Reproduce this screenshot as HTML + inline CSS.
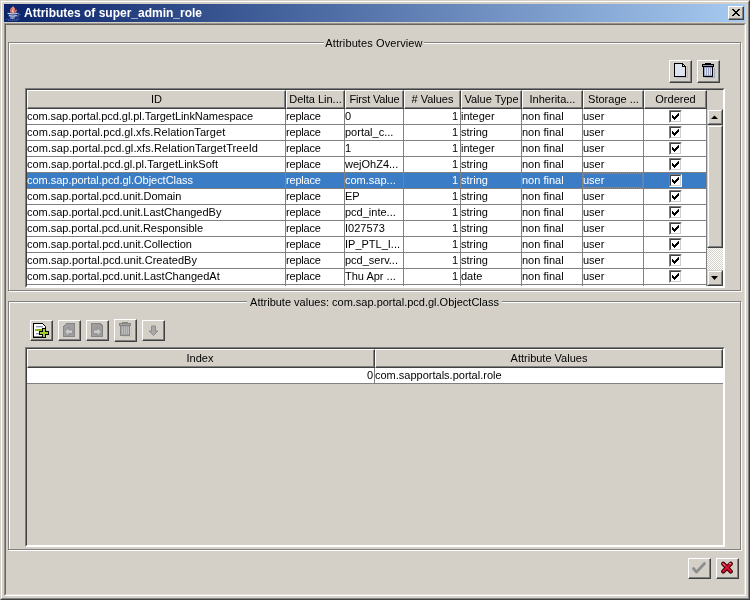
<!DOCTYPE html>
<html><head><meta charset="utf-8"><title>Attributes of super_admin_role</title>
<style>
*,*:before,*:after{box-sizing:border-box;margin:0;padding:0}
html,body{width:750px;height:600px;overflow:hidden;background:#d4d0c8}
body{position:relative;font-family:"Liberation Sans",sans-serif;font-size:11px;color:#000;line-height:16px}
.abs{position:absolute}
#frame{left:0;top:0;width:750px;height:600px;border-top:1px solid #d4d0c8;border-left:1px solid #d4d0c8;border-right:1px solid #404040;border-bottom:1px solid #404040}
#frame2{left:1px;top:1px;width:748px;height:598px;border-top:1px solid #fff;border-left:1px solid #fff;border-right:1px solid #808080;border-bottom:1px solid #808080}
#title{left:4px;top:4px;width:741px;height:18px;background:linear-gradient(to right,#0a246a 0%,#a6caf0 100%)}
#ttext{left:4px;top:4px;width:700px;height:18px}
#ttext span{position:absolute;left:20px;top:0;height:18px;line-height:18px;color:#fff;font-weight:bold;font-size:12px;white-space:nowrap}
#close{left:728px;top:6px;width:16px;height:14px;background:#d4d0c8;border-top:1px solid #fff;border-left:1px solid #fff;border-right:1px solid #404040;border-bottom:1px solid #404040}
#close i{position:absolute;left:0;top:0;right:0;bottom:0;border-right:1px solid #808080;border-bottom:1px solid #808080}
#client{left:4px;top:23px;width:742px;height:573px;border-top:1px solid #94918c;border-left:1px solid #94918c;border-right:1px solid #fff;border-bottom:1px solid #fff}
#client2{left:5px;top:24px;width:740px;height:571px;border-top:1px solid #67655f;border-left:1px solid #67655f;border-right:1px solid #e2dfd9;border-bottom:1px solid #e2dfd9}
.etch{border:1px solid #808080;box-shadow:1px 1px 0 #fff, inset 1px 1px 0 #fff}
.gbg{background:#d4d0c8;height:4px}
.gtitle{white-space:nowrap;text-align:center;height:14px;line-height:14px}
.btn{background:#d4d0c8;border-top:1px solid #fff;border-left:1px solid #fff;border-right:1px solid #404040;border-bottom:1px solid #404040}
.btn:after{content:"";position:absolute;left:0;top:0;right:0;bottom:0;border-right:1px solid #808080;border-bottom:1px solid #808080}
.sp{background:#d4d0c8;border:1px solid;border-color:#808080 #fff #fff #808080}
.sp:after{content:"";position:absolute;left:0;top:0;right:0;bottom:0;border:1px solid;border-color:#404040 #fff #fff #404040}
.th{position:absolute;top:0;height:19px;line-height:17px;text-align:center;border-top:1px solid #fff;border-left:1px solid #fff;border-right:1px solid #404040;border-bottom:1px solid #404040;box-shadow:inset -1px -1px 0 #808080;white-space:nowrap;overflow:hidden}
.row{position:absolute;left:0;height:16px;width:680px;background:#fff;border-bottom:1px solid #808080}
.row b{position:absolute;top:0;height:15px;line-height:15px;font-weight:normal;white-space:nowrap;overflow:hidden;border-right:1px solid #808080;padding-left:0}
.row.sel{background:#3a7cc5;color:#fff}
.focus{position:absolute;left:556px;top:0;width:60px;height:15px;border:1px dotted #c0a080;opacity:.5}
.cb{position:absolute;left:25px;top:1px;width:13px;height:13px;background:#fff;border-top:1px solid #808080;border-left:1px solid #808080;border-right:1px solid #fff;border-bottom:1px solid #fff}
.cb:after{content:"";position:absolute;left:0;top:0;width:11px;height:11px;border-top:1px solid #404040;border-left:1px solid #404040;border-right:1px solid #d4d0c8;border-bottom:1px solid #d4d0c8}
#sbtrack{background-color:#d4d0c8;background-image:linear-gradient(45deg,#fff 25%,transparent 25%,transparent 75%,#fff 75%),linear-gradient(45deg,#fff 25%,transparent 25%,transparent 75%,#fff 75%);background-size:2px 2px;background-position:0 0,1px 1px}
.sbb{background:#d4d0c8;border-top:1px solid #d4d0c8;border-left:1px solid #d4d0c8;border-right:1px solid #404040;border-bottom:1px solid #404040}
.sbb:after{content:"";position:absolute;left:0;top:0;right:0;bottom:0;border-top:1px solid #fff;border-left:1px solid #fff;border-right:1px solid #808080;border-bottom:1px solid #808080}
#wrap{position:absolute;left:0;top:0;width:750px;height:600px}
.th,.row b,.gtitle,#ttext{filter:grayscale(1)}
.hbg{position:absolute;left:0;top:0;right:0;height:19px;background:#d4d0c8}

</style></head><body><div id="wrap">
<div id="frame" class="abs"></div><div id="frame2" class="abs"></div>
<div id="title" class="abs"></div><svg class="abs" style="left:5px;top:4px" width="17" height="18" viewBox="0 0 17 18">
<path d="M8.700 .8c.3 1.600-2.900 2.800-3.600 5-.4 1.300-.2 2.200.4 2.900h5.300c.9-.9 1.200-2.200.4-3.700-.3 1-.8 1.400-1.500 1.800.9-1.600.3-2.700-.5-3.400-.8-.8-.9-1.500-.5-2.600z" fill="#ea8672"/>
<path d="M7.300 8.600c-1.300-1.500-.3-2.700 1.100-3.900-.5 1.500-.4 2.200.6 3.900z" fill="#f6c3b4"/>
<path d="M6.200 8.600c-.9-1.400-.2-2.600.9-3.600M9.600 8.500c.5-.8.400-1.600-.2-2.500" fill="none" stroke="#7a2a4a" stroke-width=".6"/>
<path d="M2.600 9.300c1.500.7 8 .7 10-.1M3.800 11.600c1.600.6 6.400.6 8 0M5.200 13.700c1.200.4 3.400.4 4.600 0" fill="none" stroke="#d4ddf8" stroke-width="1.200"/>
<path d="M12.800 9.400c1.800-.3 1.900 1.700-.6 2.600" fill="none" stroke="#8fa2df" stroke-width=".8"/>
<path d="M1.500 14.800c2 1.900 10.500 2 13.500-.4" fill="none" stroke="#7188d2" stroke-width="1.100" stroke-dasharray="1 1"/>
<path d="M11 15.500l4.500-5" fill="none" stroke="#6a80cc" stroke-width=".9" stroke-dasharray="1 1"/>
</svg><div class="abs" id="ttext"><span>Attributes of super_admin_role</span></div>
<div id="close" class="abs"><i></i><svg class="abs" style="left:3px;top:2px" width="8" height="7" viewBox="0 0 8 7" shape-rendering="crispEdges" fill="#000"><rect x="0" y="0" width="2" height="1"/><rect x="6" y="0" width="2" height="1"/><rect x="1" y="1" width="2" height="1"/><rect x="5" y="1" width="2" height="1"/><rect x="2" y="2" width="4" height="1"/><rect x="3" y="3" width="2" height="1"/><rect x="2" y="4" width="4" height="1"/><rect x="1" y="5" width="2" height="1"/><rect x="5" y="5" width="2" height="1"/><rect x="0" y="6" width="2" height="1"/><rect x="6" y="6" width="2" height="1"/></svg></div>
<div id="client" class="abs"></div><div id="client2" class="abs"></div>

<!-- group 1 -->
<div class="abs etch" style="left:8px;top:42px;width:733px;height:249px"></div>
<div class="abs gbg" style="left:324px;top:41px;width:100px"></div><div class="abs gtitle" style="left:324px;top:36px;width:100px;letter-spacing:.1px">Attributes Overview</div>
<!-- group 2 -->
<div class="abs etch" style="left:8px;top:301px;width:733px;height:249px"></div>
<div class="abs gbg" style="left:247px;top:300px;width:255px"></div><div class="abs gtitle" style="left:247px;top:295px;width:255px">Attribute values: com.sap.portal.pcd.gl.ObjectClass</div>
<div class="abs sp" style="left:25px;top:88px;width:700px;height:200px"></div>
<div class="abs" id="t1" style="left:27px;top:90px;width:680px;height:196px;background:#fff;overflow:hidden">
<div class="hbg"></div>
<div class="th" style="left:0px;width:259px">ID</div>
<div class="th" style="left:259px;width:59px">Delta Lin...</div>
<div class="th" style="left:318px;width:59px;letter-spacing:-.15px">First Value</div>
<div class="th" style="left:377px;width:57px"># Values</div>
<div class="th" style="left:434px;width:61px">Value Type</div>
<div class="th" style="left:495px;width:61px">Inherita...</div>
<div class="th" style="left:556px;width:61px">Storage ...</div>
<div class="th" style="left:617px;width:63px">Ordered</div>
<div class="row" style="top:19px">
<b style="left:0px;width:259px;letter-spacing:-0.061px">com.sap.portal.pcd.gl.pl.TargetLinkNamespace</b>
<b style="left:259px;width:59px;letter-spacing:-.2px">replace</b>
<b style="left:318px;width:59px">0</b>
<b style="left:377px;width:57px;text-align:right;padding:0 2px 0 0">1</b>
<b style="left:434px;width:61px">integer</b>
<b style="left:495px;width:61px">non final</b>
<b style="left:556px;width:61px">user</b>
<b style="left:617px;width:63px;padding:0"><i class="cb"><svg width="7" height="7" viewBox="0 0 7 7" shape-rendering="crispEdges" fill="#000" style="position:absolute;left:2px;top:2px"><rect x="0" y="2" width="1" height="3"/><rect x="1" y="3" width="1" height="3"/><rect x="2" y="4" width="1" height="3"/><rect x="3" y="3" width="1" height="3"/><rect x="4" y="2" width="1" height="3"/><rect x="5" y="1" width="1" height="3"/><rect x="6" y="0" width="1" height="3"/></svg></i></b>
</div>
<div class="row" style="top:35px">
<b style="left:0px;width:259px;letter-spacing:0.067px">com.sap.portal.pcd.gl.xfs.RelationTarget</b>
<b style="left:259px;width:59px;letter-spacing:-.2px">replace</b>
<b style="left:318px;width:59px">portal_c...</b>
<b style="left:377px;width:57px;text-align:right;padding:0 2px 0 0">1</b>
<b style="left:434px;width:61px">string</b>
<b style="left:495px;width:61px">non final</b>
<b style="left:556px;width:61px">user</b>
<b style="left:617px;width:63px;padding:0"><i class="cb"><svg width="7" height="7" viewBox="0 0 7 7" shape-rendering="crispEdges" fill="#000" style="position:absolute;left:2px;top:2px"><rect x="0" y="2" width="1" height="3"/><rect x="1" y="3" width="1" height="3"/><rect x="2" y="4" width="1" height="3"/><rect x="3" y="3" width="1" height="3"/><rect x="4" y="2" width="1" height="3"/><rect x="5" y="1" width="1" height="3"/><rect x="6" y="0" width="1" height="3"/></svg></i></b>
</div>
<div class="row" style="top:51px">
<b style="left:0px;width:259px;letter-spacing:0.087px">com.sap.portal.pcd.gl.xfs.RelationTargetTreeId</b>
<b style="left:259px;width:59px;letter-spacing:-.2px">replace</b>
<b style="left:318px;width:59px">1</b>
<b style="left:377px;width:57px;text-align:right;padding:0 2px 0 0">1</b>
<b style="left:434px;width:61px">integer</b>
<b style="left:495px;width:61px">non final</b>
<b style="left:556px;width:61px">user</b>
<b style="left:617px;width:63px;padding:0"><i class="cb"><svg width="7" height="7" viewBox="0 0 7 7" shape-rendering="crispEdges" fill="#000" style="position:absolute;left:2px;top:2px"><rect x="0" y="2" width="1" height="3"/><rect x="1" y="3" width="1" height="3"/><rect x="2" y="4" width="1" height="3"/><rect x="3" y="3" width="1" height="3"/><rect x="4" y="2" width="1" height="3"/><rect x="5" y="1" width="1" height="3"/><rect x="6" y="0" width="1" height="3"/></svg></i></b>
</div>
<div class="row" style="top:67px">
<b style="left:0px;width:259px;letter-spacing:0.038px">com.sap.portal.pcd.gl.pl.TargetLinkSoft</b>
<b style="left:259px;width:59px;letter-spacing:-.2px">replace</b>
<b style="left:318px;width:59px">wejOhZ4...</b>
<b style="left:377px;width:57px;text-align:right;padding:0 2px 0 0">1</b>
<b style="left:434px;width:61px">string</b>
<b style="left:495px;width:61px">non final</b>
<b style="left:556px;width:61px">user</b>
<b style="left:617px;width:63px;padding:0"><i class="cb"><svg width="7" height="7" viewBox="0 0 7 7" shape-rendering="crispEdges" fill="#000" style="position:absolute;left:2px;top:2px"><rect x="0" y="2" width="1" height="3"/><rect x="1" y="3" width="1" height="3"/><rect x="2" y="4" width="1" height="3"/><rect x="3" y="3" width="1" height="3"/><rect x="4" y="2" width="1" height="3"/><rect x="5" y="1" width="1" height="3"/><rect x="6" y="0" width="1" height="3"/></svg></i></b>
</div>
<div class="row sel" style="top:83px">
<b style="left:0px;width:259px;letter-spacing:-0.027px">com.sap.portal.pcd.gl.ObjectClass</b>
<b style="left:259px;width:59px;letter-spacing:-.2px">replace</b>
<b style="left:318px;width:59px">com.sap...</b>
<b style="left:377px;width:57px;text-align:right;padding:0 2px 0 0">1</b>
<b style="left:434px;width:61px">string</b>
<b style="left:495px;width:61px">non final</b>
<b style="left:556px;width:61px">user</b>
<b style="left:617px;width:63px;padding:0"><i class="cb"><svg width="7" height="7" viewBox="0 0 7 7" shape-rendering="crispEdges" fill="#000" style="position:absolute;left:2px;top:2px"><rect x="0" y="2" width="1" height="3"/><rect x="1" y="3" width="1" height="3"/><rect x="2" y="4" width="1" height="3"/><rect x="3" y="3" width="1" height="3"/><rect x="4" y="2" width="1" height="3"/><rect x="5" y="1" width="1" height="3"/><rect x="6" y="0" width="1" height="3"/></svg></i></b>
<u class="focus"></u>
</div>
<div class="row" style="top:99px">
<b style="left:0px;width:259px;letter-spacing:-0.01px">com.sap.portal.pcd.unit.Domain</b>
<b style="left:259px;width:59px;letter-spacing:-.2px">replace</b>
<b style="left:318px;width:59px">EP</b>
<b style="left:377px;width:57px;text-align:right;padding:0 2px 0 0">1</b>
<b style="left:434px;width:61px">string</b>
<b style="left:495px;width:61px">non final</b>
<b style="left:556px;width:61px">user</b>
<b style="left:617px;width:63px;padding:0"><i class="cb"><svg width="7" height="7" viewBox="0 0 7 7" shape-rendering="crispEdges" fill="#000" style="position:absolute;left:2px;top:2px"><rect x="0" y="2" width="1" height="3"/><rect x="1" y="3" width="1" height="3"/><rect x="2" y="4" width="1" height="3"/><rect x="3" y="3" width="1" height="3"/><rect x="4" y="2" width="1" height="3"/><rect x="5" y="1" width="1" height="3"/><rect x="6" y="0" width="1" height="3"/></svg></i></b>
</div>
<div class="row" style="top:115px">
<b style="left:0px;width:259px;letter-spacing:-0.019px">com.sap.portal.pcd.unit.LastChangedBy</b>
<b style="left:259px;width:59px;letter-spacing:-.2px">replace</b>
<b style="left:318px;width:59px">pcd_inte...</b>
<b style="left:377px;width:57px;text-align:right;padding:0 2px 0 0">1</b>
<b style="left:434px;width:61px">string</b>
<b style="left:495px;width:61px">non final</b>
<b style="left:556px;width:61px">user</b>
<b style="left:617px;width:63px;padding:0"><i class="cb"><svg width="7" height="7" viewBox="0 0 7 7" shape-rendering="crispEdges" fill="#000" style="position:absolute;left:2px;top:2px"><rect x="0" y="2" width="1" height="3"/><rect x="1" y="3" width="1" height="3"/><rect x="2" y="4" width="1" height="3"/><rect x="3" y="3" width="1" height="3"/><rect x="4" y="2" width="1" height="3"/><rect x="5" y="1" width="1" height="3"/><rect x="6" y="0" width="1" height="3"/></svg></i></b>
</div>
<div class="row" style="top:131px">
<b style="left:0px;width:259px;letter-spacing:-0.037px">com.sap.portal.pcd.unit.Responsible</b>
<b style="left:259px;width:59px;letter-spacing:-.2px">replace</b>
<b style="left:318px;width:59px">I027573</b>
<b style="left:377px;width:57px;text-align:right;padding:0 2px 0 0">1</b>
<b style="left:434px;width:61px">string</b>
<b style="left:495px;width:61px">non final</b>
<b style="left:556px;width:61px">user</b>
<b style="left:617px;width:63px;padding:0"><i class="cb"><svg width="7" height="7" viewBox="0 0 7 7" shape-rendering="crispEdges" fill="#000" style="position:absolute;left:2px;top:2px"><rect x="0" y="2" width="1" height="3"/><rect x="1" y="3" width="1" height="3"/><rect x="2" y="4" width="1" height="3"/><rect x="3" y="3" width="1" height="3"/><rect x="4" y="2" width="1" height="3"/><rect x="5" y="1" width="1" height="3"/><rect x="6" y="0" width="1" height="3"/></svg></i></b>
</div>
<div class="row" style="top:147px">
<b style="left:0px;width:259px;letter-spacing:-0.003px">com.sap.portal.pcd.unit.Collection</b>
<b style="left:259px;width:59px;letter-spacing:-.2px">replace</b>
<b style="left:318px;width:59px">IP_PTL_I...</b>
<b style="left:377px;width:57px;text-align:right;padding:0 2px 0 0">1</b>
<b style="left:434px;width:61px">string</b>
<b style="left:495px;width:61px">non final</b>
<b style="left:556px;width:61px">user</b>
<b style="left:617px;width:63px;padding:0"><i class="cb"><svg width="7" height="7" viewBox="0 0 7 7" shape-rendering="crispEdges" fill="#000" style="position:absolute;left:2px;top:2px"><rect x="0" y="2" width="1" height="3"/><rect x="1" y="3" width="1" height="3"/><rect x="2" y="4" width="1" height="3"/><rect x="3" y="3" width="1" height="3"/><rect x="4" y="2" width="1" height="3"/><rect x="5" y="1" width="1" height="3"/><rect x="6" y="0" width="1" height="3"/></svg></i></b>
</div>
<div class="row" style="top:163px">
<b style="left:0px;width:259px;letter-spacing:0.036px">com.sap.portal.pcd.unit.CreatedBy</b>
<b style="left:259px;width:59px;letter-spacing:-.2px">replace</b>
<b style="left:318px;width:59px">pcd_serv...</b>
<b style="left:377px;width:57px;text-align:right;padding:0 2px 0 0">1</b>
<b style="left:434px;width:61px">string</b>
<b style="left:495px;width:61px">non final</b>
<b style="left:556px;width:61px">user</b>
<b style="left:617px;width:63px;padding:0"><i class="cb"><svg width="7" height="7" viewBox="0 0 7 7" shape-rendering="crispEdges" fill="#000" style="position:absolute;left:2px;top:2px"><rect x="0" y="2" width="1" height="3"/><rect x="1" y="3" width="1" height="3"/><rect x="2" y="4" width="1" height="3"/><rect x="3" y="3" width="1" height="3"/><rect x="4" y="2" width="1" height="3"/><rect x="5" y="1" width="1" height="3"/><rect x="6" y="0" width="1" height="3"/></svg></i></b>
</div>
<div class="row" style="top:179px">
<b style="left:0px;width:259px;letter-spacing:0.003px">com.sap.portal.pcd.unit.LastChangedAt</b>
<b style="left:259px;width:59px;letter-spacing:-.2px">replace</b>
<b style="left:318px;width:59px">Thu Apr ...</b>
<b style="left:377px;width:57px;text-align:right;padding:0 2px 0 0">1</b>
<b style="left:434px;width:61px">date</b>
<b style="left:495px;width:61px">non final</b>
<b style="left:556px;width:61px">user</b>
<b style="left:617px;width:63px;padding:0"><i class="cb"><svg width="7" height="7" viewBox="0 0 7 7" shape-rendering="crispEdges" fill="#000" style="position:absolute;left:2px;top:2px"><rect x="0" y="2" width="1" height="3"/><rect x="1" y="3" width="1" height="3"/><rect x="2" y="4" width="1" height="3"/><rect x="3" y="3" width="1" height="3"/><rect x="4" y="2" width="1" height="3"/><rect x="5" y="1" width="1" height="3"/><rect x="6" y="0" width="1" height="3"/></svg></i></b>
</div>
<div class="row" style="top:195px"><b style="left:0px;width:259px"></b><b style="left:259px;width:59px"></b><b style="left:318px;width:59px"></b><b style="left:377px;width:57px"></b><b style="left:434px;width:61px"></b><b style="left:495px;width:61px"></b><b style="left:556px;width:61px"></b><b style="left:617px;width:63px"></b></div>
</div>
<!-- scrollbar -->
<div class="abs" id="sbtrack" style="left:707px;top:109px;width:16px;height:177px"></div>
<div class="abs sbb" style="left:707px;top:109px;width:16px;height:16px"><svg width="7" height="4" viewBox="0 0 7 4" style="position:absolute;left:3px;top:5px"><path d="M0 4L3.5 0.500 7 4z" fill="#000"/></svg></div>
<div class="abs sbb" style="left:707px;top:125px;width:16px;height:123px"></div>
<div class="abs sbb" style="left:707px;top:270px;width:16px;height:16px"><svg width="7" height="4" viewBox="0 0 7 4" style="position:absolute;left:3px;top:5px"><path d="M0 0L3.5 4 7 0z" fill="#000"/></svg></div>
<div class="abs btn" style="left:669px;top:60px;width:23px;height:23px"><svg style="position:absolute;left:-1px;top:-1px" width="23" height="23" viewBox="0 0 23 23" shape-rendering="crispEdges">
<path d="M7 17h11v-11h1v12h-12z" fill="#a9b0c4" opacity=".7"/>
<path d="M5.5 3.5h8l3 3v10h-11z" fill="#dfe4f1" stroke="#000" stroke-width="1" shape-rendering="crispEdges"/>
<path d="M13.5 3.5v3h3" fill="none" stroke="#000" stroke-width="1"/>
<path d="M14 5h1v1h1v0z" fill="#fff"/>
</svg></div>
<div class="abs btn" style="left:697px;top:60px;width:23px;height:23px"><svg style="position:absolute;left:-1px;top:-1px" width="23" height="23" viewBox="0 0 23 23" shape-rendering="crispEdges">
<path d="M8 17h9v-9h1v10h-10z" fill="#8d97b5" opacity=".7"/>
<rect x="8" y="3" width="6" height="1" fill="#000"/>
<rect x="5" y="4" width="12" height="3" fill="#000"/>
<rect x="6" y="5" width="10" height="1" fill="#8a90a8"/>
<rect x="6" y="7" width="10" height="10" fill="#000"/>
<rect x="7" y="7" width="8" height="9" fill="#9aa3c2"/>
<rect x="8" y="8" width="1" height="7" fill="#dde2f0"/>
<rect x="10" y="8" width="1" height="7" fill="#dde2f0"/>
<rect x="12" y="8" width="1" height="7" fill="#dde2f0"/>
<rect x="14" y="8" width="1" height="7" fill="#dde2f0"/>
</svg></div>
<div class="abs btn" style="left:30px;top:320px;width:23px;height:21px"><svg style="position:absolute;left:-1px;top:-1px" width="23" height="21" viewBox="0 0 23 21" shape-rendering="crispEdges">
<path d="M3.5 3.5h9l3 3v10.500h-12z" fill="#fff" stroke="#000" stroke-width="1" shape-rendering="geometricPrecision"/>
<rect x="3" y="3" width="1" height="15" fill="#000"/>
<rect x="3" y="17" width="13" height="1" fill="#000"/>
<rect x="3" y="3" width="10" height="1" fill="#000"/>
<rect x="6" y="6" width="7" height="1" fill="#8f98b4"/>
<rect x="6" y="7" width="7" height="1" fill="#d5d9e6"/>
<rect x="5" y="9" width="7" height="2" fill="#8fb020"/>
<rect x="6" y="13" width="5" height="1" fill="#8f98b4"/>
<rect x="6" y="14" width="5" height="1" fill="#d5d9e6"/>
<path d="M12 8h4v3h3v4h-3v3h-4v-3h-3v-4h3z" fill="#000"/>
<path d="M13 9h2v3h3v2h-3v3h-2v-3h-3v-2h3z" fill="#a2cc2e"/>
</svg></div>
<div class="abs btn" style="left:58px;top:320px;width:23px;height:21px"><svg style="position:absolute;left:-1px;top:-1px" width="23" height="21" viewBox="0 0 23 21" shape-rendering="crispEdges">
<path d="M8 3h9v14h-12v-11z" fill="#868686"/>
<path d="M8.500 4h7.500v12h-10v-9.500z" fill="#9e9e9e"/>
<path d="M6.800 11.750L10.750 7.200V10H14.500V13.500H10.750V16.300z" fill="#cacaca" stroke="#868686" stroke-width=".7" shape-rendering="geometricPrecision"/>
</svg></div>
<div class="abs btn" style="left:86px;top:320px;width:23px;height:21px"><svg style="position:absolute;left:-1px;top:-1px" width="23" height="21" viewBox="0 0 23 21" shape-rendering="crispEdges">
<path d="M5 3h9l3 3v11h-12z" fill="#868686"/>
<path d="M6 4h7.500l2.500 2.500v9.500h-10z" fill="#9e9e9e"/>
<path d="M15.200 11.750L11.250 7.200V10H7.500V13.500H11.250V16.300z" fill="#cacaca" stroke="#868686" stroke-width=".7" shape-rendering="geometricPrecision"/>
</svg></div>
<div class="abs btn" style="left:114px;top:319px;width:23px;height:23px"><svg style="position:absolute;left:-1px;top:-1px" width="23" height="23" viewBox="0 0 23 23" shape-rendering="crispEdges">
<path d="M8 17h9v-9h1v10h-10z" fill="#c4c0b8" opacity=".7"/>
<rect x="8" y="3" width="6" height="1" fill="#868686"/>
<rect x="5" y="4" width="12" height="3" fill="#868686"/>
<rect x="6" y="5" width="10" height="1" fill="#a2a2a2"/>
<rect x="6" y="7" width="10" height="10" fill="#868686"/>
<rect x="7" y="7" width="8" height="9" fill="#a2a2a2"/>
<rect x="8" y="8" width="1" height="7" fill="#bcbcbc"/>
<rect x="10" y="8" width="1" height="7" fill="#bcbcbc"/>
<rect x="12" y="8" width="1" height="7" fill="#bcbcbc"/>
<rect x="14" y="8" width="1" height="7" fill="#bcbcbc"/>
</svg></div>
<div class="abs btn" style="left:142px;top:320px;width:23px;height:21px"><svg style="position:absolute;left:-1px;top:-1px" width="23" height="21" viewBox="0 0 23 21" shape-rendering="crispEdges">
<path d="M9.500 6h4v5h2.500l-4.500 4.500-4.500-4.500h2.500z" fill="#a8a8a8" stroke="#8c8c8c" stroke-width="1" shape-rendering="geometricPrecision"/>
</svg></div>
<!-- lower table -->
<div class="abs sp" style="left:25px;top:347px;width:700px;height:200px"></div>
<div class="abs" style="left:27px;top:349px;width:696px;height:35px;background:#fff;overflow:hidden">
<div class="hbg"></div><div class="th" style="left:0;width:348px;padding-right:2px">Index</div>
<div class="th" style="left:348px;width:348px">Attribute Values</div>
<div class="row" style="top:19px;width:696px"><b style="left:0;width:348px;text-align:right;padding:0 1px 0 0">0</b><b style="left:348px;width:348px;border-right:0">com.sapportals.portal.role</b></div>
</div>
<div class="abs btn" style="left:688px;top:558px;width:23px;height:21px"><svg style="position:absolute;left:-1px;top:-1px" width="23" height="21" viewBox="0 0 23 21" shape-rendering="crispEdges">
<path d="M5.500 10.500l3 3.500 8-8.500" fill="none" stroke="#8e8e8e" stroke-width="2.800" stroke-linecap="round" stroke-linejoin="round" shape-rendering="geometricPrecision"/>
</svg></div>
<div class="abs btn" style="left:716px;top:558px;width:23px;height:21px"><svg style="position:absolute;left:-1px;top:-1px" width="23" height="21" viewBox="0 0 23 21" shape-rendering="crispEdges">
<path d="M7.200 5.800l7.600 7.600m0-7.600l-7.600 7.600" fill="none" stroke="#3c0008" stroke-width="4.300" stroke-linecap="round" shape-rendering="geometricPrecision"/>
<path d="M7.200 5.800l7.600 7.600m0-7.600l-7.600 7.600" fill="none" stroke="#d80e2c" stroke-width="2.200" stroke-linecap="round" shape-rendering="geometricPrecision"/>
<path d="M7 5.600l2 2m4.500-2l1.200-0" fill="none" stroke="#f7a0a8" stroke-width="1" stroke-linecap="round" shape-rendering="geometricPrecision"/>
</svg></div>

</div></body></html>
